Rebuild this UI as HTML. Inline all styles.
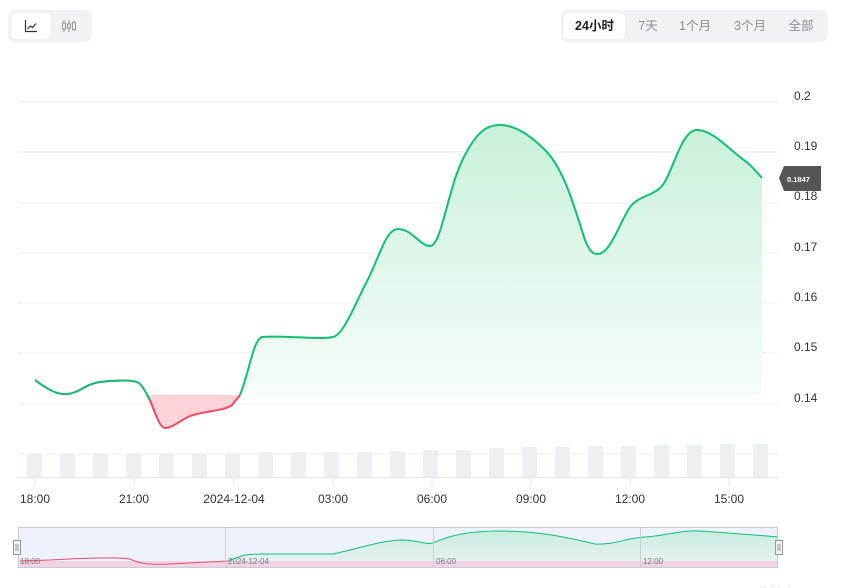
<!DOCTYPE html>
<html><head><meta charset="utf-8"><style>
body{margin:0;width:860px;height:588px;background:#fff;font-family:"Liberation Sans","Noto Sans CJK SC",sans-serif;overflow:hidden;position:relative}
.seg{position:absolute;top:10px;height:32px;background:#f0f2f5;border-radius:7px;box-sizing:border-box}
.seg div{position:absolute;top:3px;height:26px;line-height:26px;font-size:12.5px;color:#8a9099;border-radius:5px;text-align:center}
.seg .on{background:#fff;color:#222;font-weight:bold}
</style></head><body>
<div class="seg" style="left:8px;width:84px">
<div class="on" style="left:4px;width:38px;display:flex;align-items:center;justify-content:center"><svg width="14" height="14" viewBox="0 0 14 14" fill="none" stroke="#333" stroke-width="1.2"><path d="M1.5 1v11.5H13"/><path d="M3.5 10l3-3 2 1.5 3.5-4"/></svg></div>
<div style="left:48px;width:26px;display:flex;align-items:center;justify-content:center"><svg width="16" height="14" viewBox="0 0 16 14" fill="none" stroke="#999" stroke-width="1.1"><path d="M3 1v12M8 1v12M13 2v10"/><rect x="1.5" y="4" width="3" height="6" fill="#fff"/><rect x="6.5" y="5" width="3" height="4" fill="#fff"/><rect x="11.5" y="3.5" width="3" height="7" fill="#fff"/></svg></div>
</div>
<div class="seg" style="left:561px;width:267px">
<div class="on" style="left:3px;width:61px">24小时</div><div style="left:70px;width:34px">7天</div><div style="left:110px;width:48px">1个月</div><div style="left:165px;width:48px">3个月</div><div style="left:220px;width:40px">全部</div>
</div>
<svg width="860" height="588" style="position:absolute;left:0;top:0">
<defs><linearGradient id="g" x1="0" y1="0" x2="0" y2="1"><stop offset="0" stop-color="#c8f1da"/><stop offset="1" stop-color="#f6fdf9"/></linearGradient>
<linearGradient id="g2" x1="0" y1="0" x2="0" y2="1"><stop offset="0" stop-color="#c9ecdf"/><stop offset="1" stop-color="#e6f1f3"/></linearGradient></defs>
<g stroke="#eceef1" stroke-width="1">
<path d="M18 102H778M18 152H778M18 203H778M18 253H778M18 303H778M18 353H778M18 404H778M18 454H778"/></g>
<g font-size="12" fill="#333"><text x="794" y="100">0.2</text><text x="794" y="150">0.19</text><text x="794" y="200">0.18</text><text x="794" y="251">0.17</text><text x="794" y="301">0.16</text><text x="794" y="351">0.15</text><text x="794" y="402">0.14</text></g>
<path d="M145 395 C155 415 160 428 165 428 C172 428 178 422 188 417 C200 411 222 412 232 405 L240 395 Z" fill="#ffd4d8"/>
<path d="M240 395 C250 370 253 340 262 337 C280 335 320 340 333 337 C343 335 355 305 365 285 C378 262 385 229 398 229 C412 229 420 246 430 246 C442 246 448 185 465 155 C478 130 488 125 500 125 C515 125 530 135 545 150 C565 170 575 210 585 240 C590 252 593 254 598 254 C610 254 620 222 630 207 C640 195 650 197 660 188 C672 178 680 130 697 130 C712 130 728 148 740 157 C750 164 755 170 762 178 L762 395 Z" fill="url(#g)"/>
<path d="M35 380 C48 390 58 395 67 394 C80 393 85 384 100 382 C115 380 132 380 137 382 C142 384 146 393 150 400 C156 415 160 428 165 428 C172 428 178 422 188 417 C200 411 222 412 232 405 L240 395" fill="none" stroke="#f04a65" stroke-width="2"/>
<path d="M35 380 C48 390 58 395 67 394 C80 393 85 384 100 382 C115 380 132 380 137 382 C142 384 146 393 150 400" fill="none" stroke="#11c074" stroke-width="2"/>
<path d="M240 395 C250 370 253 340 262 337 C280 335 320 340 333 337 C343 335 355 305 365 285 C378 262 385 229 398 229 C412 229 420 246 430 246 C442 246 448 185 465 155 C478 130 488 125 500 125 C515 125 530 135 545 150 C565 170 575 210 585 240 C590 252 593 254 598 254 C610 254 620 222 630 207 C640 195 650 197 660 188 C672 178 680 130 697 130 C712 130 728 148 740 157 C750 164 755 170 762 178" fill="none" stroke="#11c074" stroke-width="2"/>
<path d="M779 178 L784 166 H821 V191 H784 Z" fill="#555"/>
<text x="787" y="182" font-size="7.5" font-weight="bold" fill="#fff">0.1847</text>
<g fill="#edf0f3">
<rect x="27" y="454" width="15" height="23"/><rect x="60" y="454" width="15" height="23"/><rect x="93" y="454" width="15" height="23"/><rect x="126" y="454" width="15" height="23"/><rect x="159" y="454" width="15" height="23"/><rect x="192" y="454" width="15" height="23"/><rect x="225" y="453" width="15" height="24"/><rect x="258" y="452" width="15" height="25"/><rect x="291" y="452" width="15" height="25"/><rect x="324" y="452" width="15" height="25"/><rect x="357" y="452" width="15" height="25"/><rect x="390" y="451" width="15" height="26"/><rect x="423" y="450" width="15" height="27"/><rect x="456" y="450" width="15" height="27"/><rect x="489" y="448" width="15" height="29"/><rect x="522" y="447" width="15" height="30"/><rect x="555" y="447" width="15" height="30"/><rect x="588" y="446" width="15" height="31"/><rect x="621" y="446" width="15" height="31"/><rect x="654" y="445" width="15" height="32"/><rect x="687" y="445" width="15" height="32"/><rect x="720" y="444" width="15" height="33"/><rect x="753" y="444" width="15" height="33"/></g>
<path d="M18 477.5H778" stroke="#e3e6ea"/>
<g stroke="#e3e6ea"><path d="M35 478v8M134 478v8M234 478v8M333 478v8M432 478v8M531 478v8M630 478v8M729 478v8"/></g>
<g font-size="12" fill="#333" text-anchor="middle"><text x="35" y="503">18:00</text><text x="134" y="503">21:00</text><text x="234" y="503">2024-12-04</text><text x="333" y="503">03:00</text><text x="432" y="503">06:00</text><text x="531" y="503">09:00</text><text x="630" y="503">12:00</text><text x="729" y="503">15:00</text></g>
<rect x="18" y="527" width="760" height="41" fill="#eef2fd"/>
<rect x="18" y="561" width="760" height="7" fill="#f1d3e3"/>
<path d="M150 561 L228 561 C240 556 245 554 262 554 L333 554 C360 548 380 541 400 540 C420 540 425 545 433 543 C450 535 470 531 500 531 C540 531 570 538 595 544 C615 545 625 538 645 537 C665 536 680 530 700 531 C730 533 755 535 778 537 V561 Z" fill="url(#g2)"/>
<path d="M20 561 L50 560 C80 558 120 557 130 559 C140 564 150 565 170 564 L228 561" fill="none" stroke="#f04a65" stroke-width="1"/>
<path d="M228 561 C240 556 245 554 262 554 L333 554 C360 548 380 541 400 540 C420 540 425 545 433 543 C450 535 470 531 500 531 C540 531 570 538 595 544 C615 545 625 538 645 537 C665 536 680 530 700 531 C730 533 755 535 778 537" fill="none" stroke="#11c074" stroke-width="1"/>
<rect x="18.5" y="527.5" width="759" height="40" fill="none" stroke="#c8ccd4"/>
<path d="M225.5 527v41M433.5 527v41M640.5 527v41" stroke="#ccd0d8"/>
<g font-size="8" fill="#777"><text x="20" y="564">18:00</text><text x="228" y="564">2024-12-04</text><text x="436" y="564">06:00</text><text x="643" y="564">12:00</text></g>
<rect x="13.5" y="540.5" width="7" height="14" fill="#f2f2f2" stroke="#999"/><path d="M16 544v7M18 544v7" stroke="#999"/>
<rect x="775.5" y="540.5" width="7" height="14" fill="#f2f2f2" stroke="#999"/><path d="M778 544v7M780 544v7" stroke="#999"/>
<text x="760" y="592" font-size="7" fill="#bbb">Highcharts.com.cn</text>
</svg>
</body></html>
